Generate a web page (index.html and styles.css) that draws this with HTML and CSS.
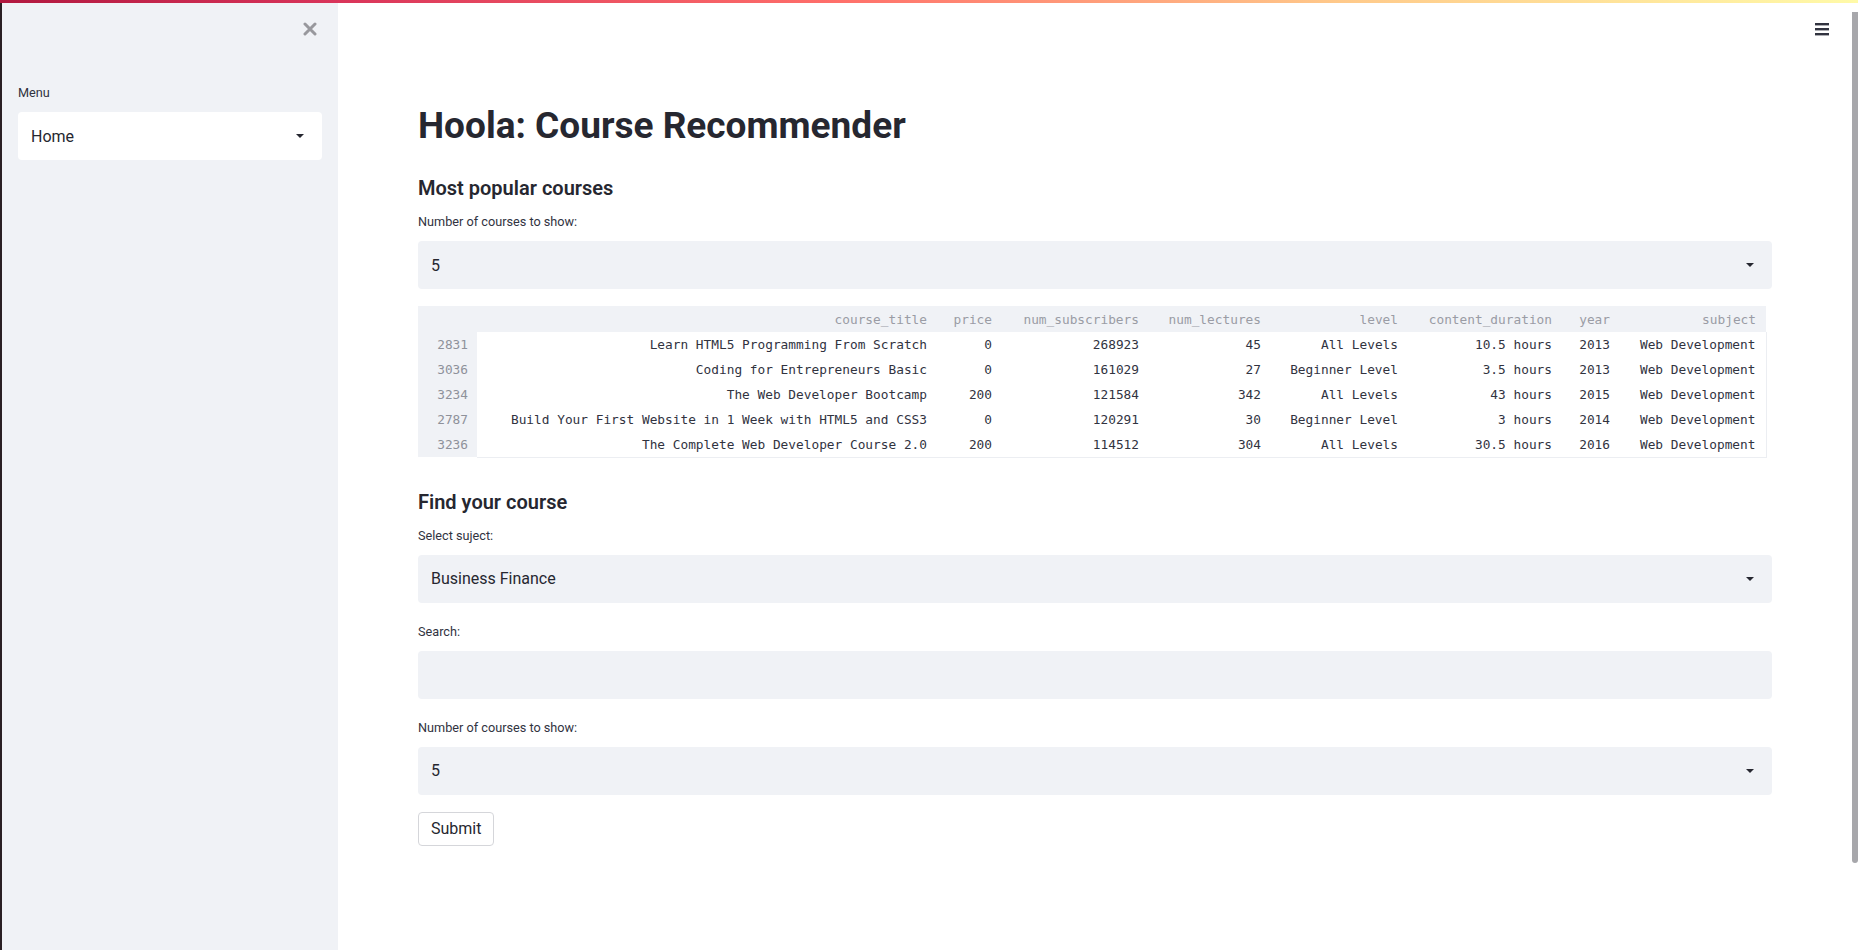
FILE: index.html
```html
<!DOCTYPE html>
<html lang="en">
<head>
<meta charset="utf-8">
<title>Hoola: Course Recommender</title>
<link rel="stylesheet" href="styles.css">
</head>
<body>
<div class="decoration"></div>
<div class="app">
  <aside class="sidebar">
    <div class="sidebar-head">
      <span class="close-btn">
        <svg width="14" height="14" viewBox="0 0 14 14"><path d="M2 2L12 12M12 2L2 12" stroke="#98989d" stroke-width="3" stroke-linecap="round"/></svg>
      </span>
    </div>
    <div class="side-widget">
      <label class="label">Menu</label>
      <div class="select select-white"><span>Home</span><svg class="caret" viewBox="0 0 8 4"><path d="M0 0H8L4 4Z" fill="#262730"/></svg></div>
    </div>
  </aside>
  <div class="main">
    <div class="main-scroll">
      <div class="toolbar">
        <svg class="hamburger" width="14" height="13" viewBox="0 0 14 13"><rect x="0" y="0" width="14" height="2.4" fill="#31333f"/><rect x="0" y="5" width="14" height="2.4" fill="#31333f"/><rect x="0" y="10" width="14" height="2.4" fill="#31333f"/></svg>
      </div>
      <div class="block">
        <h1 class="title">Hoola: Course Recommender</h1>
        <h3 class="subheader">Most popular courses</h3>
        <div class="widget">
          <label class="label">Number of courses to show:</label>
          <div class="select"><span>5</span><svg class="caret" viewBox="0 0 8 4"><path d="M0 0H8L4 4Z" fill="#262730"/></svg></div>
        </div>
        <div class="table-wrap">
          <table class="df">
            <colgroup>
              <col class="c-idx"><col class="c-title"><col class="c-price"><col class="c-subs"><col class="c-lect"><col class="c-level"><col class="c-dur"><col class="c-year"><col class="c-subj">
            </colgroup>
            <thead>
              <tr><th></th><th>course_title</th><th>price</th><th>num_subscribers</th><th>num_lectures</th><th>level</th><th>content_duration</th><th>year</th><th>subject</th></tr>
            </thead>
            <tbody>
              <tr><th>2831</th><td>Learn HTML5 Programming From Scratch</td><td>0</td><td>268923</td><td>45</td><td>All Levels</td><td>10.5 hours</td><td>2013</td><td>Web Development</td></tr>
              <tr><th>3036</th><td>Coding for Entrepreneurs Basic</td><td>0</td><td>161029</td><td>27</td><td>Beginner Level</td><td>3.5 hours</td><td>2013</td><td>Web Development</td></tr>
              <tr><th>3234</th><td>The Web Developer Bootcamp</td><td>200</td><td>121584</td><td>342</td><td>All Levels</td><td>43 hours</td><td>2015</td><td>Web Development</td></tr>
              <tr><th>2787</th><td>Build Your First Website in 1 Week with HTML5 and CSS3</td><td>0</td><td>120291</td><td>30</td><td>Beginner Level</td><td>3 hours</td><td>2014</td><td>Web Development</td></tr>
              <tr><th>3236</th><td>The Complete Web Developer Course 2.0</td><td>200</td><td>114512</td><td>304</td><td>All Levels</td><td>30.5 hours</td><td>2016</td><td>Web Development</td></tr>
            </tbody>
          </table>
        </div>
        <h3 class="subheader sub-find">Find your course</h3>
        <div class="widget">
          <label class="label">Select suject:</label>
          <div class="select"><span>Business Finance</span><svg class="caret" viewBox="0 0 8 4"><path d="M0 0H8L4 4Z" fill="#262730"/></svg></div>
        </div>
        <div class="widget">
          <label class="label">Search:</label>
          <div class="select input"></div>
        </div>
        <div class="widget">
          <label class="label">Number of courses to show:</label>
          <div class="select"><span>5</span><svg class="caret" viewBox="0 0 8 4"><path d="M0 0H8L4 4Z" fill="#262730"/></svg></div>
        </div>
        <button class="btn">Submit</button>
      </div>
    </div>
    <div class="scrollbar"><div class="thumb"></div></div>
  </div>
</div>
</body>
</html>
```
FILE: styles.css
```css
* { box-sizing: border-box; }
html, body { margin: 0; height: 100%; overflow: hidden; }
body {
  font-family: Roboto, "Liberation Sans", Arial, sans-serif;
  color: #262730;
  background: #ffffff;
}
.decoration {
  position: fixed;
  top: 0; left: 0; right: 0;
  height: 3px;
  background: linear-gradient(90deg, #b1183f 0%, #d9345a 18%, #ff6f6a 45%, #ffc98a 72%, #fffaa8 100%);
  z-index: 10;
}
.app { display: flex; height: 100vh; }

/* Sidebar */
.sidebar {
  width: 338px;
  flex: none;
  background: #f0f2f6;
  border-left: 2px solid #2a1f24;
  padding: 0 16px;
}
.sidebar-head {
  display: flex;
  justify-content: flex-end;
  padding: 22px 5px 0 0;
  height: 36px;
}
.close-btn svg { display: block; }
.side-widget { margin-top: 49px; }

/* Widgets */
.label {
  display: block;
  font-size: 12.7px;
  line-height: 16px;
  color: #31333f;
  margin-bottom: 11px;
}
.select {
  height: 48px;
  border-radius: 4px;
  background: #f0f2f6;
  display: flex;
  align-items: center;
  justify-content: space-between;
  padding: 0 18px 0 13px;
  font-size: 16px;
  color: #262730;
}
.select-white { background: #ffffff; }
.caret { width: 8px; height: 4px; display: block; }

/* Main */
.main { flex: 1; display: flex; min-width: 0; }
.main-scroll { flex: 1; min-width: 0; overflow: hidden; }
.toolbar {
  height: 46px;
  display: flex;
  justify-content: flex-end;
  padding: 23px 23px 0 0;
}
.hamburger { display: block; }
.block { padding: 56px 80px 160px; }
.title {
  margin: 0;
  font-size: 37px;
  line-height: 48px;
  font-weight: 700;
  color: #262730;
}
.subheader {
  margin: 26px 0 0;
  font-size: 20px;
  line-height: 24px;
  font-weight: 600;
  color: #262730;
}
.sub-find { margin-top: 32px; }
.widget { margin-top: 21px; }
.subheader + .widget { margin-top: 14px; }

/* Dataframe */
.table-wrap { margin-top: 17px; }
.df {
  border-collapse: collapse;
  table-layout: fixed;
  width: 1348px;
  font-family: "DejaVu Sans Mono", "Liberation Mono", monospace;
  font-size: 12.8px;
}
.c-idx { width: 59px; }
.c-title { width: 460px; }
.c-price { width: 65px; }
.c-subs { width: 147px; }
.c-lect { width: 122px; }
.c-level { width: 137px; }
.c-dur { width: 154px; }
.c-year { width: 58px; }
.c-subj { width: 146px; }
.df th, .df td {
  padding: 0 10px 0 0;
  text-align: right;
  white-space: nowrap;
  font-weight: 400;
}
.df thead th {
  height: 26px;
  background: #f0f2f6;
  color: #9a9ca5;
}
.df tbody td {
  height: 25px;
  color: #31333f;
  background: #ffffff;
}
.df tbody th {
  height: 25px;
  background: #f0f2f6;
  color: #8e919a;
  padding-right: 9px;
}
.df tbody tr:last-child td { border-bottom: 1px solid #eceef2; }
.df tbody td:last-child { border-right: 1px solid #eceef2; }

/* Button */
.btn {
  display: block;
  margin-top: 17px;
  height: 34px;
  padding: 0 12px;
  border: 1px solid #d5d6da;
  border-radius: 4px;
  background: #ffffff;
  font-family: Roboto, "Liberation Sans", Arial, sans-serif;
  font-size: 16px;
  color: #262730;
}

/* Scrollbar */
.scrollbar { width: 6px; flex: none; padding-top: 12px; }
.thumb {
  height: 851px;
  background: #a7a7ab;
  border-radius: 0 0 3px 3px;
}
```
